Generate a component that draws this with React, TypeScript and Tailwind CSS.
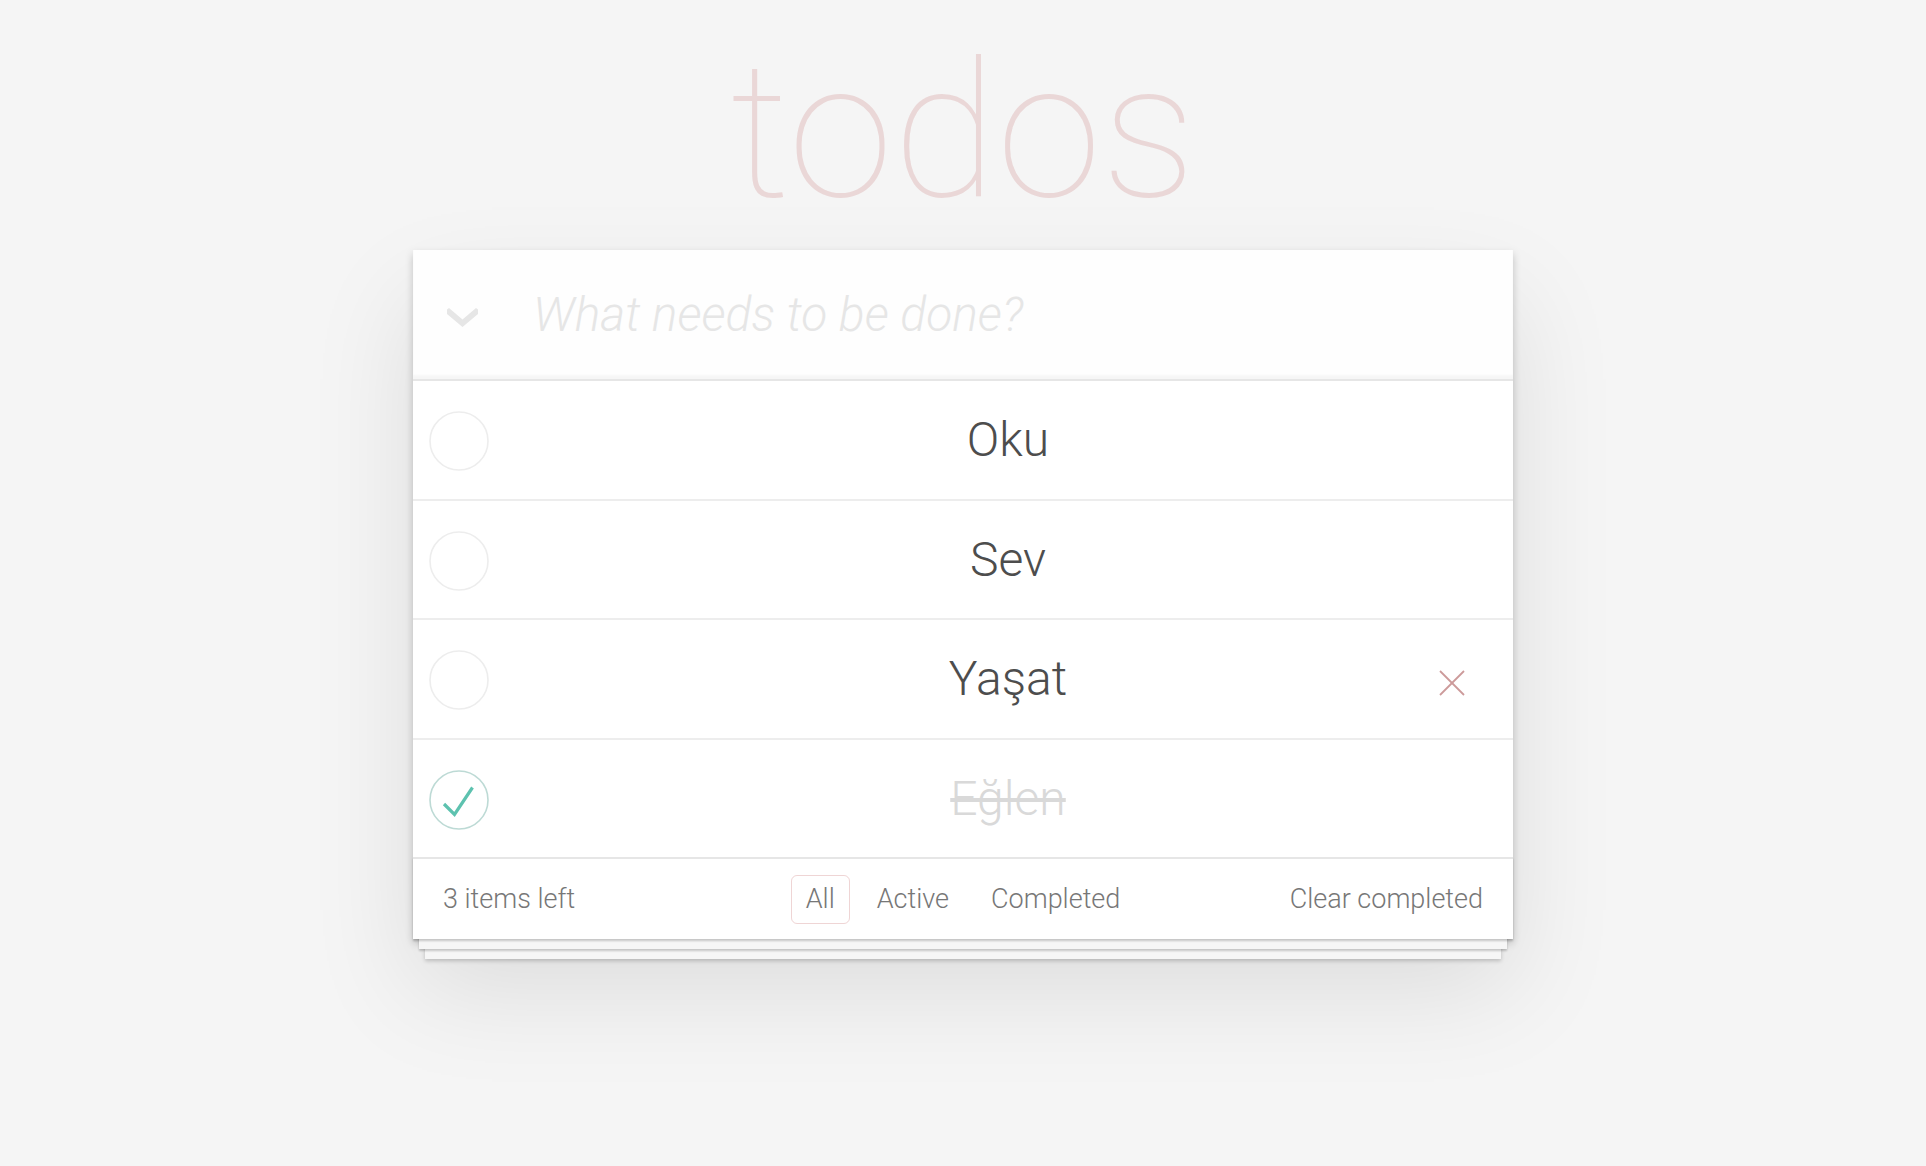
import React from "react";

type Todo = { text: string; done: boolean; hover?: boolean };

const todos: Todo[] = [
  { text: "Oku", done: false },
  { text: "Sev", done: false },
  { text: "Yaşat", done: false, hover: true },
  { text: "Eğlen", done: true },
];

function Toggle({ done }: { done: boolean }) {
  return (
    <svg width="60" height="60" viewBox="0 0 60 60" className="absolute left-[16px] top-[30px]">
      <circle cx="30" cy="30" r="29" fill="none" stroke={done ? "#bddad5" : "#ededed"} strokeWidth="1.6" />
      {done && (
        <polyline points="15,34 25.5,44.5 43.5,17.5" fill="none" stroke="#5dc2af" strokeWidth="3.2" />
      )}
    </svg>
  );
}

export default function App() {
  return (
    <div className="min-h-screen bg-[#f5f5f5] font-['Roboto','Liberation_Sans',sans-serif] font-light text-[#4d4d4d]">
      <div className="mx-auto w-[1100px]">
        <div className="h-[250px] pt-[31px]">
          <h1 className="text-center text-[190px] leading-[200px] font-thin text-[#af2f2f26]">todos</h1>
        </div>
        <section className="relative bg-white shadow-[0_4px_8px_0_rgba(0,0,0,0.2),0_50px_100px_0_rgba(0,0,0,0.1)]">
          <header className="flex h-[129px] items-center bg-[#00000001] shadow-[inset_0_-4px_2px_rgba(0,0,0,0.03)]">
            <div className="w-[120px] pl-[34px] pt-[6px]">
              <svg width="31" height="19" viewBox="0 0 31 19">
                <polygon points="0,1.5 2,0 15.5,11.5 29,0 31,1.5 31,6 15.5,19 0,6" fill="#e6e6e6" />
              </svg>
            </div>
            <span className="text-[48px] italic font-light text-[#e6e6e6]">What needs to be done?</span>
          </header>
          <ul className="border-t-2 border-[#e6e6e6]">
            {todos.map((t, i) => (
              <li
                key={t.text}
                className={`relative ${i < todos.length - 1 ? "border-b-2 border-[#ededed]" : ""}`}
              >
                <Toggle done={t.done} />
                <label
                  className={`block py-[30px] pl-[120px] pr-[30px] text-center text-[48px] leading-[57.6px] font-light ${
                    t.done ? "text-[#d9d9d9] line-through" : "text-[#4d4d4d]"
                  }`}
                >
                  {t.text}
                </label>
                {t.hover && (
                  <svg width="26" height="26" viewBox="0 0 26 26" className="absolute right-[48px] top-[50px]">
                    <line x1="1" y1="1" x2="25" y2="25" stroke="#cc9a9a" strokeWidth="1.8" />
                    <line x1="25" y1="1" x2="1" y2="25" stroke="#cc9a9a" strokeWidth="1.8" />
                  </svg>
                )}
              </li>
            ))}
          </ul>
          <footer className="relative flex h-[82px] items-center justify-between border-t-2 border-[#e6e6e6] px-[30px] text-[27px] text-[#777] shadow-[0_2px_2px_rgba(0,0,0,0.2),0_16px_0_-6px_#f6f6f6,0_18px_2px_-6px_rgba(0,0,0,0.2),0_32px_0_-12px_#f6f6f6,0_34px_4px_-12px_rgba(0,0,0,0.2)]">
            <span>3 items left</span>
            <ul className="absolute inset-x-0 flex justify-center gap-[12px]">
              <li>
                <a className="block rounded-[6px] border border-[#af2f2f33] px-[14px] py-[6px] leading-[35px]">All</a>
              </li>
              <li>
                <a className="block rounded-[6px] border border-transparent px-[14px] py-[6px] leading-[35px]">Active</a>
              </li>
              <li>
                <a className="block rounded-[6px] border border-transparent px-[14px] py-[6px] leading-[35px]">Completed</a>
              </li>
            </ul>
            <span className="relative">Clear completed</span>
          </footer>
        </section>
      </div>
    </div>
  );
}
